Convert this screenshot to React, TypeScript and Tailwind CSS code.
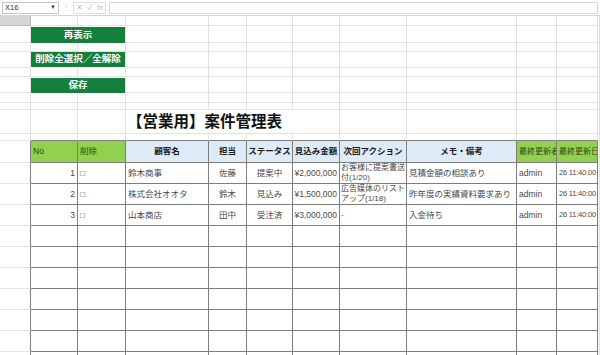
import React from "react";

const COLS =
  "grid grid-cols-[31px_47px_48px_83px_38px_46px_47px_67px_110px_40px_41px_1fr]";
const LIGHT = "border-r border-b border-[#e2e2e2]";
const DARK = "border-r border-b border-[#7d7d7d]";
const FONT = "font-['Liberation_Sans','Noto_Sans_CJK_JP',sans-serif]";

function BlankRow({ h, darkBottom }: { h: string; darkBottom?: boolean }) {
  return (
    <div className={`${COLS} ${h}`}>
      {Array.from({ length: 12 }, (_, i) => (
        <div
          key={i}
          className={
            darkBottom && i >= 1 && i <= 10
              ? "border-r border-b border-r-[#e2e2e2] border-b-[#7d7d7d]"
              : LIGHT
          }
        />
      ))}
    </div>
  );
}

function ButtonRow({ h, label, pad }: { h: string; label: string; pad: string }) {
  return (
    <div className={`${COLS} ${h}`}>
      <div className={LIGHT} />
      <div className={`col-span-2 flex flex-col border-r border-[#e2e2e2] ${pad}`}>
        <div className="flex flex-1 items-center justify-center whitespace-nowrap bg-[#15803d] text-[9.5px] font-bold text-white">
          {label}
        </div>
      </div>
      {Array.from({ length: 9 }, (_, i) => (
        <div key={i} className={LIGHT} />
      ))}
    </div>
  );
}

type Rec = {
  no: string;
  name: string;
  rep: string;
  status: string;
  amount: string;
  action: string[];
  memo: string;
  user: string;
  date: string;
};

const records: Rec[] = [
  {
    no: "1",
    name: "鈴木商事",
    rep: "佐藤",
    status: "提案中",
    amount: "¥2,000,000",
    action: ["お客様に提案書送", "付(1/20)"],
    memo: "見積金額の相談あり",
    user: "admin",
    date: "26 11:40:00",
  },
  {
    no: "2",
    name: "株式会社オオタ",
    rep: "鈴木",
    status: "見込み",
    amount: "¥1,500,000",
    action: ["広告媒体のリスト", "アップ(1/18)"],
    memo: "昨年度の実績資料要求あり",
    user: "admin",
    date: "26 11:40:00",
  },
  {
    no: "3",
    name: "山本商店",
    rep: "田中",
    status: "受注済",
    amount: "¥3,000,000",
    action: ["-"],
    memo: "入金待ち",
    user: "admin",
    date: "26 11:40:00",
  },
];

function Cell({ className = "", children }: { className?: string; children?: React.ReactNode }) {
  return (
    <div className={`${DARK} flex items-center overflow-hidden whitespace-nowrap px-[2px] ${className}`}>
      {children}
    </div>
  );
}

function DataRow({ r }: { r?: Rec }) {
  return (
    <div className={`${COLS} h-[21px] text-[8.5px] text-[#4a4a4a]`}>
      <div className="border-r border-b border-r-[#7d7d7d] border-b-[#e2e2e2]" />
      <Cell className="justify-end">{r?.no}</Cell>
      <Cell>{r ? "□" : ""}</Cell>
      <Cell>{r?.name}</Cell>
      <Cell className="justify-center">{r?.rep}</Cell>
      <Cell className="justify-center">{r?.status}</Cell>
      <Cell className="justify-end">{r?.amount}</Cell>
      <div className={`${DARK} flex flex-col justify-center overflow-hidden px-[1px] text-[8px] leading-[10px]`}>
        {r?.action.map((a) => (
          <span key={a} className="whitespace-nowrap">
            {a}
          </span>
        ))}
      </div>
      <Cell>{r?.memo}</Cell>
      <Cell>{r?.user}</Cell>
      <Cell className="px-[1px] text-[7.5px] tracking-[-0.2px]">{r?.date}</Cell>
      <div className={LIGHT} />
    </div>
  );
}

export default function App() {
  return (
    <div className={`h-[355px] w-[600px] overflow-hidden bg-white ${FONT}`}>
      {/* formula bar */}
      <div className="flex h-[16px] items-center gap-[3px] border-b border-[#d4d4d4] bg-white px-[2px]">
        <div className="flex h-[12px] w-[57px] items-center justify-between border border-[#c6c6c6] px-[2px] text-[7.5px] text-[#333]">
          <span>X16</span>
          <span className="text-[6px] text-[#444]">▼</span>
        </div>
        <span className="text-[8px] leading-none text-[#c8c8c8]">⋮</span>
        <div className="flex h-[12px] w-[33px] items-center justify-around border border-[#e0e0e0] text-[8px] text-[#bdbdbd]">
          <span>✕</span>
          <span>✓</span>
          <span className="italic">fx</span>
        </div>
        <div className="h-[12px] flex-1 border border-[#d8d8d8]" />
      </div>

      {/* row with gray corner */}
      <div className={`${COLS} h-[10px]`}>
        <div className="border-r border-b border-[#b9b9b9] bg-[#d6d6d6]" />
        {Array.from({ length: 11 }, (_, i) => (
          <div key={i} className={LIGHT} />
        ))}
      </div>

      <ButtonRow h="h-[17px]" label="再表示" pad="pt-[1px]" />
      <BlankRow h="h-[9px]" />
      <ButtonRow h="h-[16px]" label="削除全選択／全解除" pad="pb-[1px]" />
      <BlankRow h="h-[9px]" />
      <ButtonRow h="h-[16px]" label="保存" pad="pt-[1px]" />
      <BlankRow h="h-[10px]" />
      <BlankRow h="h-[7px]" />

      {/* title */}
      <div className={`${COLS} h-[24px]`}>
        <div className={LIGHT} />
        <div className={LIGHT} />
        <div className={LIGHT} />
        <div className="col-span-4 flex items-center border-r border-b border-[#e2e2e2] pl-[1px] text-[15.5px] font-bold text-[#111]">
          【営業用】案件管理表
        </div>
        {Array.from({ length: 5 }, (_, i) => (
          <div key={i} className={LIGHT} />
        ))}
      </div>
      <BlankRow h="h-[7px]" darkBottom />

      {/* header */}
      <div className={`${COLS} h-[22px] text-[8.5px]`}>
        <div className="border-r border-b border-r-[#7d7d7d] border-b-[#e2e2e2]" />
        <Cell className="bg-[#92d050] text-[#2d4a12]">No</Cell>
        <Cell className="bg-[#92d050] text-[#2d4a12]">削除</Cell>
        <Cell className="justify-center bg-[#ddebf7] font-bold text-[#1a1a1a]">顧客名</Cell>
        <Cell className="justify-center bg-[#ddebf7] font-bold text-[#1a1a1a]">担当</Cell>
        <Cell className="justify-center bg-[#ddebf7] font-bold text-[#1a1a1a]">ステータス</Cell>
        <Cell className="justify-center bg-[#ddebf7] font-bold text-[#1a1a1a]">見込み金額</Cell>
        <Cell className="justify-center bg-[#ddebf7] font-bold text-[#1a1a1a]">次回アクション</Cell>
        <Cell className="justify-center bg-[#ddebf7] font-bold text-[#1a1a1a]">メモ・備考</Cell>
        <Cell className="bg-[#92d050] px-0 text-[8px] text-[#2d4a12]">最終更新者</Cell>
        <Cell className="bg-[#92d050] px-0 text-[8px] text-[#2d4a12]">最終更新日</Cell>
        <div className={LIGHT} />
      </div>

      {records.map((r) => (
        <DataRow key={r.no} r={r} />
      ))}
      {Array.from({ length: 7 }, (_, i) => (
        <DataRow key={`e${i}`} />
      ))}
    </div>
  );
}
